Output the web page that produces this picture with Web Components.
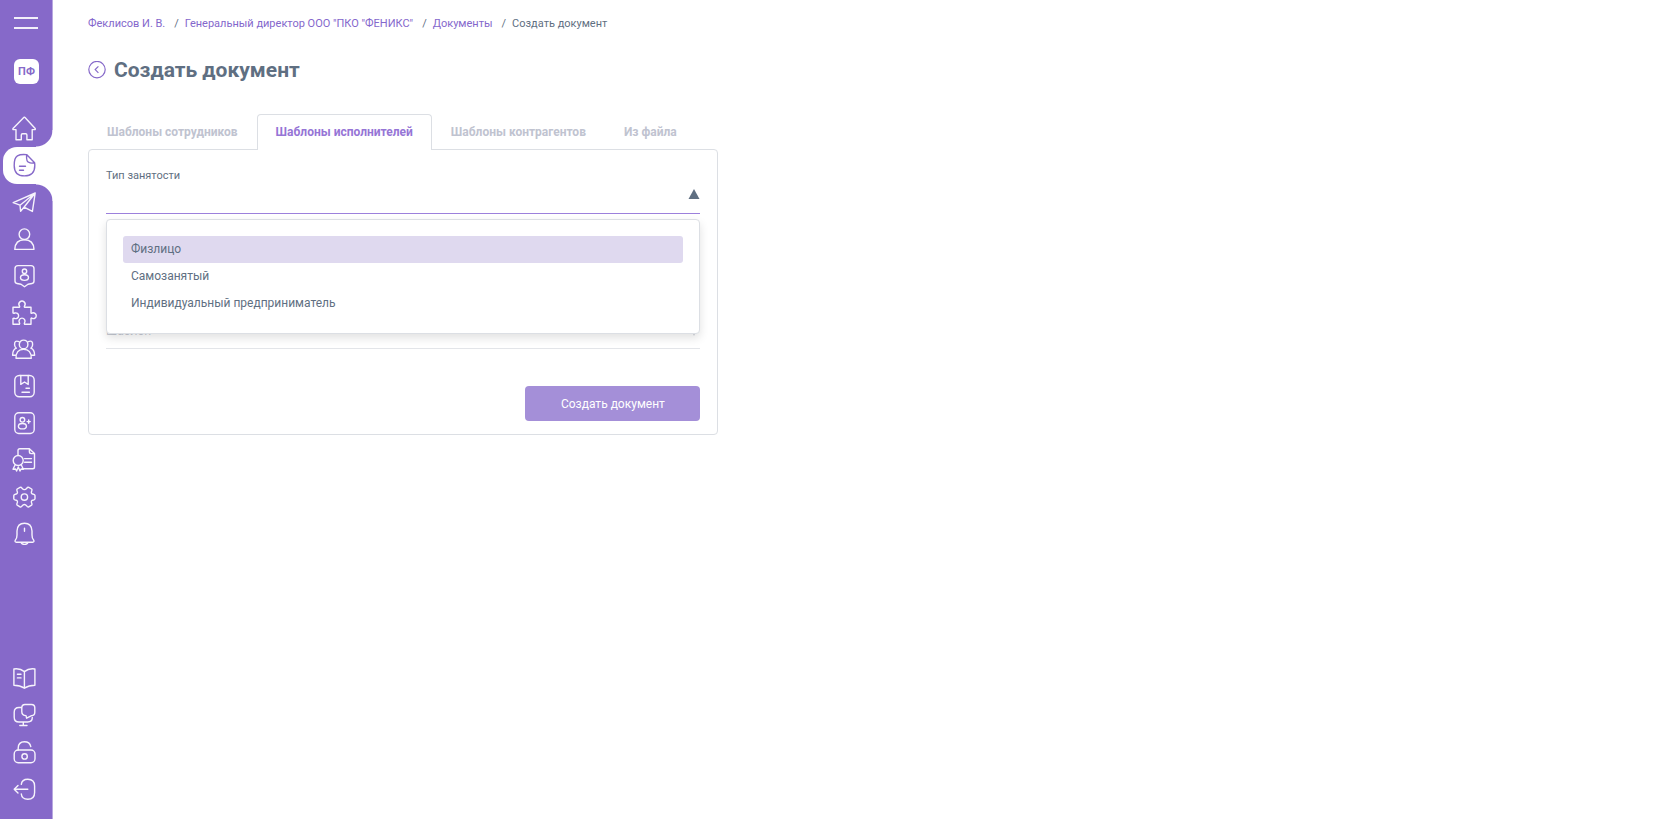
<!DOCTYPE html>
<html lang="ru">
<head>
<meta charset="utf-8">
<title>Создать документ</title>
<style>
  body {
    margin: 0;
    font-family: Roboto, "Liberation Sans", sans-serif;
    font-size: 12px;
    color: #5f6f82;
    background: #fff;
    --purple: #8669c9;
    --light-purple: #a48fd8;
    --line: #dcdfe4;
  }
</style>
</head>
<body>
<app-layout>
  <side-bar slot="side"></side-bar>
  <bread-crumbs>
    <a href="#user">Феклисов И. В.</a>
    <a href="#company">Генеральный директор ООО "ПКО "ФЕНИКС"</a>
    <a href="#documents">Документы</a>
    <span>Создать документ</span>
  </bread-crumbs>
  <page-title>Создать документ</page-title>
  <tab-card tabs="Шаблоны сотрудников|Шаблоны исполнителей|Шаблоны контрагентов|Из файла" active="1">
    <select-field label="Тип занятости" options="Физлицо|Самозанятый|Индивидуальный предприниматель" open></select-field>
    <select-field placeholder="Шаблон"></select-field>
    <main-button>Создать документ</main-button>
  </tab-card>
</app-layout>

<script>
const ICONS = {
  home: '<path d="M12 1.3 1 12.6Q.5 13.6 1.6 13.6H4V23.8H9.3V19Q9.3 17.8 10.5 17.8H13.7Q14.9 17.8 14.9 19V23.8H20.2V13.6H22.6Q23.7 13.6 23.2 12.6L13 1.6Q12.5 .9 12 1.3Z"/>',
  document: '<path d="M14.6 1.6Q8.5 1 5.4 2.8Q2.2 4.6 2.2 12.4Q2.2 22.9 12.5 22.9Q22.8 22.9 22.8 12.5Q22.8 11 22.6 9.8ZM14.6 1.6Q14.2 8.8 16.8 9.3Q18.6 10.6 22.6 9.8M7.5 13.3H13.5M7.5 17.2H11.5"/>',
  plane: '<path d="M23.2 3 1.2 12.6 8 15.2 8.6 21.2 12 17.2 20.4 21.4ZM8 15.2 23.2 3 12 17.2"/>',
  person: '<circle cx="12.4" cy="7.2" r="5.3"/><path d="M2.8 22.4Q3.3 12.8 12.4 12.8T22 22.4Z"/>',
  badge: '<path d="M6 1.6H19Q22 1.6 22 4.6V17Q22 19.2 20 19.5L16 20.2 12.5 22.8 9 20.2 5 19.5Q3 19.2 3 17V4.6Q3 1.6 6 1.6Z"/><circle cx="12.5" cy="7.2" r="2.2"/><ellipse cx="12.5" cy="13.6" rx="4" ry="2.8"/>',
  puzzle: '<path d="M1 6.3H7.2Q8 5.8 7.5 5A3.1 3.1 0 1 1 12.5 5Q12 5.8 12.8 6.3H19V12Q19.5 12.6 20.3 12A2.9 2.9 0 1 1 20.3 17.4Q19.5 16.8 19 17.4V23.3H12.6Q12 22.6 12.6 21.6A3 3 0 1 0 7.4 21.6Q8 22.6 7.4 23.3H1V17.6Q1.6 17 2.8 17.5A2.9 2.9 0 1 0 2.8 12Q1.6 12.5 1 12Z"/>',
  group: '<circle cx="11.6" cy="7.4" r="4.3"/><path d="M4 21.3Q3.8 12.4 11.6 12.4T19.3 21.3ZM7 4.6Q2.2 2.8 2.6 8Q2.8 10 4.4 11.2Q.6 12.6 .6 18.2H3.6M16.2 4.6Q21 2.8 20.6 8Q20.4 10 18.8 11.2Q22.6 12.6 22.6 18.2H19.6"/>',
  bookmark: '<rect x="2.8" y="1.5" width="19.4" height="21.2" rx="4.5"/><path d="M8.8 1.5V10.4L12.5 8 16.2 10.4V1.5M14 14.2H17.4M10 18.2H17.4"/>',
  contact: '<rect x="2.8" y="1.7" width="19.4" height="20.8" rx="4"/><circle cx="10.4" cy="8.8" r="2.3"/><ellipse cx="10.4" cy="15.2" rx="4" ry="2.7"/><path d="M16.7 9V12.2M15.1 10.6H18.3"/>',
  certificate: '<path d="M6 7V2.5Q6 .7 7.8 .7H17.4L22.5 5.6V19Q22.5 20.8 20.7 20.8H10.4M17.4 .7V3.8Q17.4 5.6 19.2 5.6H22.5M12.6 10.6H19.5M12.6 14.2H19.5"/><circle cx="6.2" cy="12.5" r="5"/><path d="M3.2 16.8 1 21.2 3.6 21 4.6 23 6.3 19 8 23 9 21 11.4 21.2 9.2 16.8"/>',
  gear: '<path transform="translate(12.4 12.1)" d="M10.6-1.6V1.6Q10.5 2.6 9 2.9Q6 3.4 7.3 6Q8 7.2 7.2 8.1L4.4 9.7Q3.2 10.2 2.4 8.9Q0 6 -2.4 8.9Q-3.2 10.2-4.4 9.7L-7.2 8.1Q-8 7.2-7.3 6Q-6 3.4-9 2.9Q-10.5 2.6-10.6 1.6V-1.6Q-10.5-2.6-9-2.9Q-6-3.4-7.3-6Q-8-7.2-7.2-8.1L-4.4-9.7Q-3.2-10.2-2.4-8.9Q0-6 2.4-8.9Q3.2-10.2 4.4-9.7L7.2-8.1Q8-7.2 7.3-6Q6-3.4 9-2.9Q10.5-2.6 10.6-1.6Z"/><circle cx="12.4" cy="12.1" r="3.2"/>',
  bell: '<path d="M9 20.2H4Q2.4 19.6 3.4 18Q5 16.4 5 13V9Q5.4 1.3 12.5 1.3T20 9V13Q20 16.4 21.6 18Q22.6 19.6 21 20.2H9Q9.8 22.4 12.5 22.4T16 20.2M12.5 6.2V9.2"/>',
  book: '<path d="M12.4 5.6Q8 2 1.9 3V19.2Q8 19.2 12.4 22.2Q16.8 19.2 22.9 19.2V3Q16.8 2 12.4 5.6V22.2M5.4 8.3H9M5.4 11.9H9"/>',
  chat: '<path d="M9.8 4.5H7Q2.2 4.5 2.2 9.3V14.2Q2.2 19 7 19H15.6Q20.3 19 20.3 14.5M11.3 19V22.5M7.8 22.5H15M13 1.5H19.5Q22.8 1.5 22.8 4.8V9.2Q22.8 12.5 19.6 12.6L14.6 15.2 14 12.6Q9.8 12.5 9.8 8.8V4.8Q9.8 1.5 13 1.5Z"/>',
  lock: '<rect x="2.2" y="10" width="20.8" height="12.8" rx="4"/><path d="M6.2 10V8Q6.4 1.8 12.4 1.8Q17.8 1.8 18.8 6.6"/><circle cx="12.6" cy="16.4" r="2.7"/>',
  exit: '<path d="M9.3 7.4Q9.8 2.2 15.8 2.2Q22.6 2.2 22.6 9V15.4Q22.6 22.2 15.8 22.2Q9.8 22.2 9.3 17M15.8 12.2H2.2M6 8.4 2.2 12.2 6 16"/>'
};

class AppLayout extends HTMLElement {
  constructor() {
    super();
    this.attachShadow({ mode: "open" });
    this.shadowRoot.innerHTML = `
    <style>
      :host {
        display: flex;
        min-height: 100vh;
      }
      main {
        flex: 1;
        display: grid;
        grid-template-columns: minmax(600px, 2fr) 3fr;
        grid-auto-rows: max-content;
        padding: 17px 16px 16px 35px;
      }
      ::slotted(*) {
        grid-column: 1;
      }
      ::slotted(bread-crumbs), ::slotted(page-title) {
        grid-column: 1 / -1;
      }
    </style>
    <slot name="side"></slot>
    <main><slot></slot></main>`;
  }
}

class SideLink extends HTMLElement {
  connectedCallback() {
    this.attachShadow({ mode: "open" });
    this.shadowRoot.innerHTML = `
    <style>
      :host {
        display: flex;
        color: #f6f3fc;
      }
      a {
        flex: 1;
        display: flex;
        align-items: center;
        padding-left: 12px;
        color: inherit;
      }
      svg {
        width: 24px;
        height: 24px;
        overflow: visible;
        fill: none;
        stroke: currentColor;
        stroke-width: 1.4;
        stroke-linecap: round;
        stroke-linejoin: round;
      }
      :host([active]) {
        position: relative;
        margin: 0 -1px 0 3px;
        border-radius: 14px 0 0 14px;
        background: #fff;
        color: var(--purple);
      }
      :host([active]) a {
        padding-left: 9px;
      }
      /* concave corners above and below the current item */
      :host([active])::before, :host([active])::after {
        content: "";
        position: absolute;
        right: 0;
        width: 17px;
        height: 17px;
      }
      :host([active])::before {
        bottom: 100%;
        background: radial-gradient(circle at 0 0, transparent 16px, #fff 17px);
      }
      :host([active])::after {
        top: 100%;
        background: radial-gradient(circle at 0 100%, transparent 16px, #fff 17px);
      }
    </style>
    <a href="#${this.getAttribute("icon")}" aria-label="${this.getAttribute("icon")}">
      <svg viewBox="0 0 24 24">${ICONS[this.getAttribute("icon")]}</svg>
    </a>`;
  }
}

class SideBar extends HTMLElement {
  constructor() {
    super();
    this.attachShadow({ mode: "open" });
    this.shadowRoot.innerHTML = `
    <style>
      :host {
        display: flex;
        flex-direction: column;
        flex: none;
        box-sizing: border-box;
        width: 53px;
        padding: 17px 0 12px;
        background: var(--purple);
        border-right: 1px solid #b8a8e0;
      }
      button {
        display: flex;
        flex-direction: column;
        gap: 8px;
        width: 24px;
        margin: 0 14px;
        padding: 0;
        border: 0;
        background: none;
      }
      button i {
        width: 24px;
        height: 2px;
        background: #f3f0fa;
      }
      .company {
        display: flex;
        align-items: center;
        justify-content: center;
        width: 25px;
        height: 25px;
        margin: 30px 14px 26px;
        border-radius: 6px;
        background: #fff;
        color: var(--purple);
        font-size: 11px;
        font-weight: 700;
        text-decoration: none;
      }
      nav {
        display: grid;
        grid-auto-rows: 1fr;
      }
      .top {
        height: 442px;
      }
      .bottom {
        height: 147px;
        margin-top: auto;
      }
    </style>
    <button aria-label="Меню"><i></i><i></i></button>
    <a class="company" href="#company">ПФ</a>
    <nav class="top">
      <side-link icon="home"></side-link>
      <side-link icon="document" active></side-link>
      <side-link icon="plane"></side-link>
      <side-link icon="person"></side-link>
      <side-link icon="badge"></side-link>
      <side-link icon="puzzle"></side-link>
      <side-link icon="group"></side-link>
      <side-link icon="bookmark"></side-link>
      <side-link icon="contact"></side-link>
      <side-link icon="certificate"></side-link>
      <side-link icon="gear"></side-link>
      <side-link icon="bell"></side-link>
    </nav>
    <nav class="bottom">
      <side-link icon="book"></side-link>
      <side-link icon="chat"></side-link>
      <side-link icon="lock"></side-link>
      <side-link icon="exit"></side-link>
    </nav>`;
  }
}

class BreadCrumbs extends HTMLElement {
  constructor() {
    super();
    this.attachShadow({ mode: "open" });
    this.shadowRoot.innerHTML = `
    <style>
      :host {
        display: block;
        font-size: 11px;
        line-height: 14px;
      }
      nav {
        display: flex;
        flex-wrap: wrap;
      }
      ::slotted(a) {
        color: #8467cc;
        text-decoration: none;
      }
      ::slotted(:not(:first-child))::before {
        content: "/";
        padding: 0 6px 0 9px;
        color: #5f6f82;
      }
    </style>
    <nav><slot></slot></nav>`;
  }
}

class PageTitle extends HTMLElement {
  constructor() {
    super();
    this.attachShadow({ mode: "open" });
    this.shadowRoot.innerHTML = `
    <style>
      :host {
        display: flex;
        align-items: center;
        gap: 8px;
        margin: 25px 0 30px;
      }
      a {
        display: flex;
        color: var(--purple);
      }
      svg {
        width: 18px;
        height: 18px;
        fill: none;
        stroke: currentColor;
        stroke-width: 1.2;
      }
      h1 {
        margin: 0;
        font-size: 21px;
        line-height: 28px;
      }
    </style>
    <a href="#back" aria-label="Назад">
      <svg viewBox="0 0 18 18"><circle cx="9" cy="8.6" r="8.2"/><path d="M10.4 5.4 7.2 8.6 10.4 11.8"/></svg>
    </a>
    <h1><slot></slot></h1>`;
  }
}

class TabCard extends HTMLElement {
  connectedCallback() {
    this.attachShadow({ mode: "open" });
    const active = Number(this.getAttribute("active"));
    const tabs = this.getAttribute("tabs").split("|");
    this.shadowRoot.innerHTML = `
    <style>
      :host {
        display: block;
      }
      .tabs {
        display: flex;
      }
      button {
        height: 35px;
        padding: 0 18px 1px;
        border: 1px solid transparent;
        border-bottom: 0;
        border-radius: 4px 4px 0 0;
        background: none;
        color: #c0c3d0;
        font: 700 12px/16px Roboto, "Liberation Sans", sans-serif;
        white-space: nowrap;
      }
      button[aria-selected="true"] {
        z-index: 1;
        margin-bottom: -1px;
        padding-bottom: 2px;
        height: 36px;
        border-color: var(--line);
        background: #fff;
        color: #9675d6;
      }
      .card {
        display: flex;
        flex-direction: column;
        padding: 19px 17px 13px;
        border: 1px solid var(--line);
        border-radius: 4px;
      }
    </style>
    <div class="tabs" role="tablist">
      ${tabs.map((tab, i) => `<button role="tab" aria-selected="${i === active}">${tab}</button>`).join("")}
    </div>
    <div class="card" role="tabpanel"><slot></slot></div>`;
    this.shadowRoot.querySelectorAll("button").forEach((button) => {
      button.addEventListener("click", this._select.bind(this));
    });
  }

  _select(event) {
    this.shadowRoot.querySelectorAll("button").forEach((button) => {
      button.setAttribute("aria-selected", button === event.currentTarget);
    });
  }
}

class SelectField extends HTMLElement {
  connectedCallback() {
    this.attachShadow({ mode: "open" });
    const label = this.getAttribute("label");
    const placeholder = this.getAttribute("placeholder") || "";
    const options = (this.getAttribute("options") || "").split("|").filter(Boolean);
    this.shadowRoot.innerHTML = `
    <style>
      :host {
        display: block;
        position: relative;
      }
      label {
        display: block;
        font-size: 11px;
        line-height: 14px;
      }
      .field {
        display: flex;
        align-items: center;
        border-bottom: 1px solid #e3e5e9;
      }
      :host(:not([open])) .field {
        margin-top: 100px;
      }
      select {
        flex: 1;
        height: 34px;
        padding: 0;
        border: 0;
        outline: 0;
        appearance: none;
        background: none;
        color: #c6cad3;
        font: 12px/16px Roboto, "Liberation Sans", sans-serif;
      }
      svg {
        width: 12px;
        height: 10px;
        fill: #d5d8de;
        transform: rotate(180deg);
      }
      :host([open]) .field {
        height: 30px;
        border-color: #9c80dc;
      }
      :host([open]) select {
        height: 30px;
      }
      :host([open]) svg {
        fill: #5f6f82;
        margin-bottom: 8px;
        transform: none;
      }
      ul {
        position: absolute;
        z-index: 2;
        top: 100%;
        left: 0;
        right: 0;
        margin: 5px 0 0;
        padding: 16px;
        list-style: none;
        border: 1px solid var(--line);
        border-radius: 4px;
        background: #fff;
        box-shadow: 0 4px 10px rgba(0, 0, 0, .12);
      }
      li {
        padding: 5px 8px 6px;
        border-radius: 3px;
        line-height: 16px;
      }
      li[aria-selected="true"] {
        background: #dfd9ef;
      }
    </style>
    ${label ? `<label for="field">${label}</label>` : ""}
    <div class="field">
      <select id="field" aria-label="${label || placeholder}">
        <option>${placeholder}</option>
      </select>
      <svg viewBox="0 0 12 10"><path d="M6 0 11.5 10H.5Z"/></svg>
    </div>
    ${options.length ? `<ul role="listbox">
      ${options.map((text, i) => `<li role="option" aria-selected="${i === 0}">${text}</li>`).join("")}
    </ul>` : ""}`;
  }
}

class MainButton extends HTMLElement {
  constructor() {
    super();
    this.attachShadow({ mode: "open" });
    this.shadowRoot.innerHTML = `
    <style>
      :host {
        display: flex;
        justify-content: flex-end;
        margin-top: 37px;
      }
      button {
        width: 175px;
        height: 35px;
        padding: 0;
        border: 0;
        border-radius: 4px;
        background: var(--light-purple);
        color: #fff;
        font: 12px/16px Roboto, "Liberation Sans", sans-serif;
      }
    </style>
    <button><slot></slot></button>`;
  }
}

customElements.define("app-layout", AppLayout);
customElements.define("side-link", SideLink);
customElements.define("side-bar", SideBar);
customElements.define("bread-crumbs", BreadCrumbs);
customElements.define("page-title", PageTitle);
customElements.define("tab-card", TabCard);
customElements.define("select-field", SelectField);
customElements.define("main-button", MainButton);
</script>
</body>
</html>
